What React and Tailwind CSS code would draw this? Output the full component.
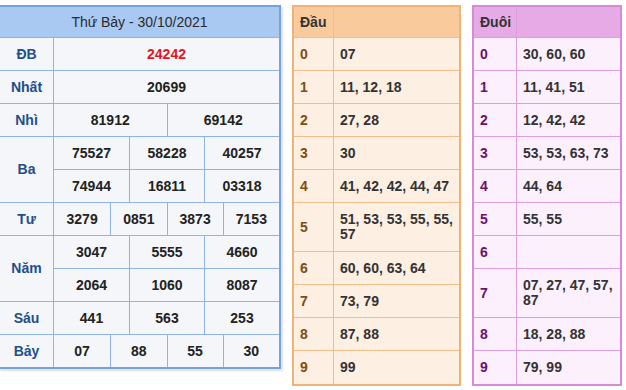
const font = { fontFamily: '"Liberation Sans", Arial, sans-serif' }

const prizes = [
  { label: 'ĐB', rows: [['24242']], red: true },
  { label: 'Nhất', rows: [['20699']] },
  { label: 'Nhì', rows: [['81912', '69142']] },
  { label: 'Ba', rows: [['75527', '58228', '40257'], ['74944', '16811', '03318']] },
  { label: 'Tư', rows: [['3279', '0851', '3873', '7153']] },
  { label: 'Năm', rows: [['3047', '5555', '4660'], ['2064', '1060', '8087']] },
  { label: 'Sáu', rows: [['441', '563', '253']] },
  { label: 'Bảy', rows: [['07', '88', '55', '30']] },
]

const dau = [
  ['0', '07'],
  ['1', '11, 12, 18'],
  ['2', '27, 28'],
  ['3', '30'],
  ['4', '41, 42, 42, 44, 47'],
  ['5', '51, 53, 53, 55, 55, 57', true],
  ['6', '60, 60, 63, 64'],
  ['7', '73, 79'],
  ['8', '87, 88'],
  ['9', '99'],
]

const duoi = [
  ['0', '30, 60, 60'],
  ['1', '11, 41, 51'],
  ['2', '12, 42, 42'],
  ['3', '53, 53, 63, 73'],
  ['4', '44, 64'],
  ['5', '55, 55'],
  ['6', ''],
  ['7', '07, 27, 47, 57, 87', true],
  ['8', '18, 28, 88'],
  ['9', '79, 99'],
]

const gridCols = {
  1: 'grid-cols-1',
  2: 'grid-cols-2',
  3: 'grid-cols-3',
  4: 'grid-cols-4',
}

function ResultTable() {
  return (
    <div className="-ml-[2px] w-[283px] shrink-0 self-start border-2 border-[#74a2e2] bg-[#f4f6f9] shadow-[2px_2px_2px_rgba(0,0,0,0.12)]">
      <div className="flex h-[31px] items-center justify-center border-b border-[#8fb3e6] bg-[#a9c8f2] text-[14px] text-[#2b2b2b]">
        Thứ Bảy - 30/10/2021
      </div>
      {prizes.map((p, pi) => (
        <div
          key={p.label}
          className={`flex ${pi < prizes.length - 1 ? 'border-b border-[#8fb3e6]' : ''}`}
        >
          <div className="flex w-[54px] shrink-0 items-center justify-center border-r border-[#8fb3e6] text-[14px] font-bold text-[#1d4f8c]">
            {p.label}
          </div>
          <div className="flex flex-1 flex-col">
            {p.rows.map((r, ri) => (
              <div
                key={ri}
                className={`grid ${gridCols[r.length]} ${ri < p.rows.length - 1 ? 'h-[33px] border-b border-[#8fb3e6]' : 'h-[32px]'}`}
              >
                {r.map((n, ni) => (
                  <div
                    key={ni}
                    className={`flex items-center justify-center text-[14px] font-bold ${p.red ? 'text-[#e8141b]' : 'text-[#222]'} ${ni > 0 ? 'border-l border-[#8fb3e6]' : ''}`}
                  >
                    {n}
                  </div>
                ))}
              </div>
            ))}
          </div>
        </div>
      ))}
    </div>
  )
}

function LotoTable({ title, rows, theme }) {
  return (
    <div className={`shrink-0 self-start border-2 ${theme.outer} ${theme.cell} ${theme.width}`}>
      <div className={`flex h-[31px] border-b ${theme.line} ${theme.head}`}>
        <div className={`flex ${theme.labelW} shrink-0 items-center border-r ${theme.line} pl-[6px] text-[14px] font-bold text-[#333]`}>
          {title}
        </div>
        <div className="flex-1" />
      </div>
      {rows.map(([k, v, tall], i) => (
        <div
          key={k}
          className={`flex ${tall ? 'h-[49px]' : 'h-[33px]'} ${i < rows.length - 1 ? `border-b ${theme.line}` : ''}`}
        >
          <div className={`flex ${theme.labelW} shrink-0 items-center border-r ${theme.line} pl-[6px] text-[14px] font-bold ${theme.label}`}>
            {k}
          </div>
          <div className="flex flex-1 items-center px-[6px] text-[14px] font-bold leading-[15px] text-[#333]">
            {v}
          </div>
        </div>
      ))}
    </div>
  )
}

export default function App() {
  return (
    <div className="flex h-[390px] w-[626px] gap-[11px] overflow-hidden bg-white pt-[5px]" style={font}>
      <ResultTable />
      <LotoTable
        title="Đầu"
        rows={dau}
        theme={{
          width: 'w-[169px]',
          labelW: 'w-[40px]',
          outer: 'border-[#f0b377]',
          line: 'border-[#f2bd86]',
          head: 'bg-[#f9ca9b]',
          cell: 'bg-[#fdefe2]',
          label: 'text-[#7e4d12]',
        }}
      />
      <LotoTable
        title="Đuôi"
        rows={duoi}
        theme={{
          width: 'w-[150px]',
          labelW: 'w-[43px]',
          outer: 'border-[#d68bd6]',
          line: 'border-[#dc9edc]',
          head: 'bg-[#e6aae6]',
          cell: 'bg-[#fcf0fc]',
          label: 'text-[#6a106a]',
        }}
      />
    </div>
  )
}
